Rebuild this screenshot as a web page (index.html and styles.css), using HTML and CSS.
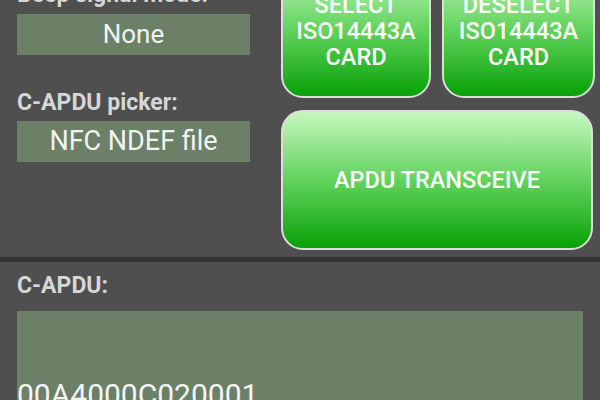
FILE: index.html
```html
<!DOCTYPE html>
<html lang="en">
<head>
    <meta charset="UTF-8">
    <meta name="viewport" content="width=device-width, initial-scale=1.0">
    <title>APDU Transceiver</title>
    <link rel="stylesheet" href="styles.css">
</head>
<body>

    <div class="top">
        <!-- Settings column -->
        <div class="settings">
            <label class="caption first">Beep signal mode:</label>
            <div class="picker">None</div>

            <label class="caption second">C-APDU picker:</label>
            <div class="picker wide-text">NFC NDEF file select</div>
        </div>

        <!-- Action buttons -->
        <div class="actions">
            <div class="row">
                <button class="btn small">SELECT ISO14443A CARD</button>
                <button class="btn small wide">DESELECT ISO14443A CARD</button>
            </div>
            <button class="btn big">APDU TRANSCEIVE</button>
        </div>
    </div>

    <div class="divider"></div>

    <div class="bottom">
        <label class="caption">C-APDU:</label>
        <div class="apdu">00A4000C020001</div>
    </div>

</body>
</html>
```

FILE: styles.css
```css
body {
    font-family: Roboto, "Liberation Sans", sans-serif;
    background-color: #4f4f4f;
    margin: 0;
    height: 400px;
    overflow: hidden;
}
.top {
    display: flex;
    gap: 31px;
    height: 297px;
    margin-top: -40px;
    padding-left: 17px;
}
.settings {
    width: 233px;
    padding-top: 22px;
}
.caption {
    display: block;
    font-size: 23px;
    font-weight: bold;
    line-height: 25px;
    color: #d6d6d6;
}
.caption.second {
    margin-top: 35px;
    margin-bottom: 6px;
}
.first + .picker {
    margin-top: 7px;
}
.picker {
    height: 41px;
    line-height: 41px;
    background-color: #6c8068;
    color: #f2f2f2;
    font-size: 26px;
    text-align: center;
    overflow: hidden;
}
.picker.wide-text {
    font-size: 27px;
}
.actions {
    width: 314px;
    display: flex;
    flex-direction: column;
    gap: 12px;
}
.row {
    display: flex;
    gap: 11px;
}
.btn {
    font-family: Roboto, "Liberation Sans", sans-serif;
    font-weight: 500;
    font-size: 23.5px;
    line-height: 26px;
    color: #fff;
    border: 2px solid #dcdedc;
    border-radius: 22px;
    background: linear-gradient(#c6f7bf, #62d35d 50%, #08a108);
    padding: 0 6px;
    cursor: pointer;
}
.btn.small {
    width: 150px;
    height: 138px;
    padding-top: 4px;
}
.btn.small.wide {
    width: 153px;
}
.btn.big {
    width: 312px;
    height: 140px;
}
.divider {
    height: 5px;
    background-color: #333;
}
.bottom {
    padding: 11px 0 0 17px;
}
.bottom .caption {
    margin-bottom: 13px;
}
.apdu {
    width: 566px;
    height: 120px;
    box-sizing: border-box;
    padding-top: 66px;
    background-color: #6c8068;
    color: #f4f4f4;
    font-size: 30px;
    line-height: 35px;
}
```
